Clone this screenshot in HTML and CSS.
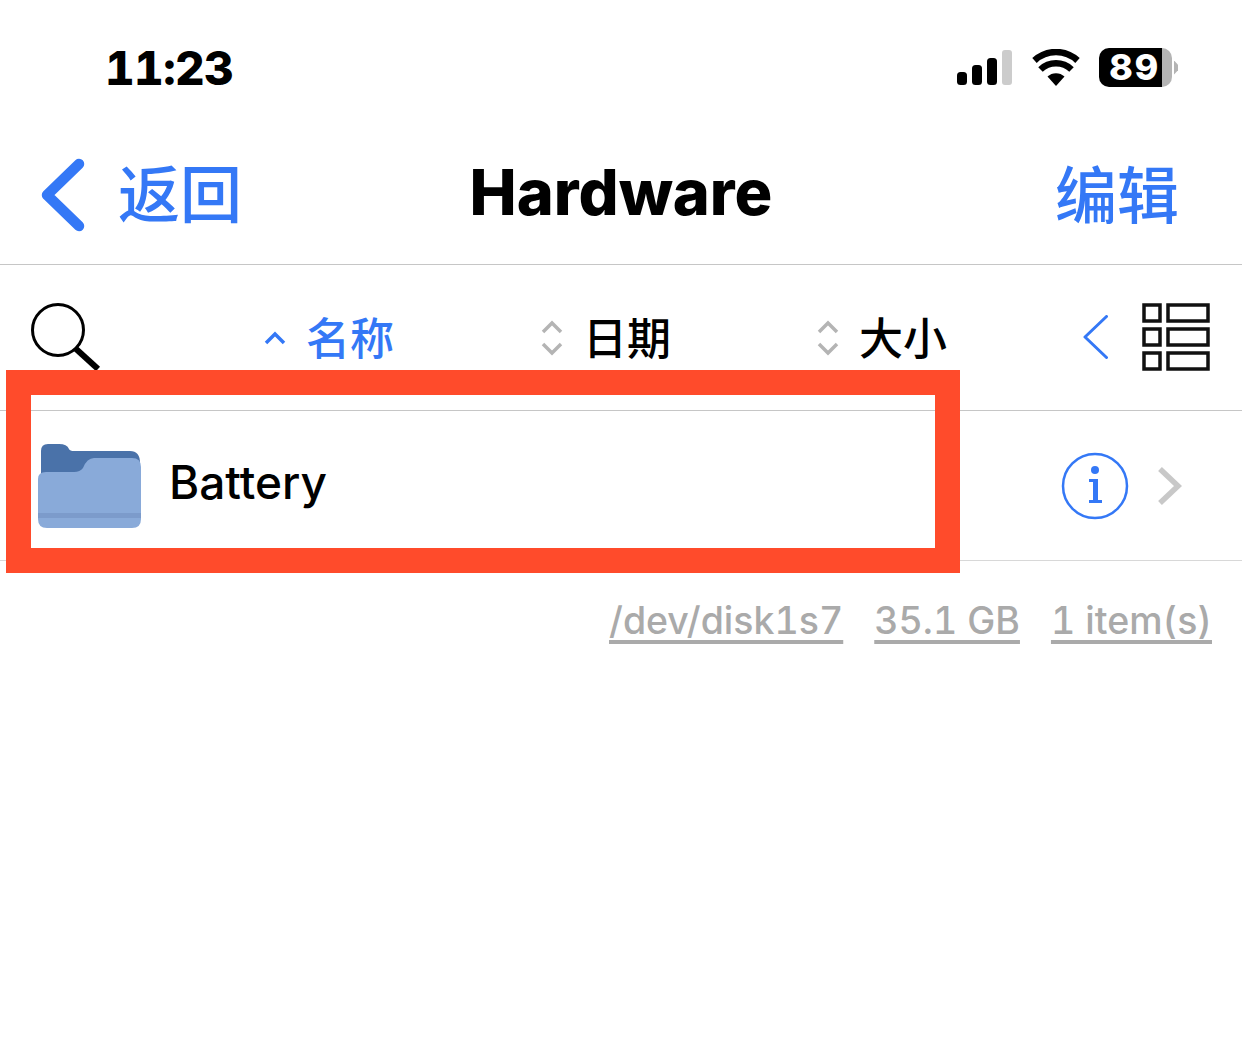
FILE: index.html
```html
<!DOCTYPE html>
<html lang="zh-CN">
<head>
  <meta charset="UTF-8">
  <title>Hardware</title>
  <link rel="stylesheet" href="styles.css">
</head>
<body>
  <div class="status-bar">
    <span class="time">11:23</span>
    <div class="status-icons">
      <svg class="signal" width="56" height="36" viewBox="0 0 56 36">
        <rect x="0" y="22" width="10" height="13" rx="3.5" fill="#000"/>
        <rect x="15" y="15" width="10" height="20" rx="3.5" fill="#000"/>
        <rect x="30" y="8" width="10" height="27" rx="3.5" fill="#000"/>
        <rect x="45" y="0" width="10" height="35" rx="3" fill="#ccc"/>
      </svg>
      <svg class="wifi" width="48" height="38" viewBox="0 0 48 38">
        <path d="M24 37 L15.500 27.500 A12.500 12.500 0 0 1 32.500 27.500 Z" fill="#000"/>
        <path d="M8.500 20.500 A22.500 22.500 0 0 1 39.500 20.500" fill="none" stroke="#000" stroke-width="6.500"/>
        <path d="M2.500 11.500 A31.500 31.500 0 0 1 45.500 11.500" fill="none" stroke="#000" stroke-width="6.500"/>
      </svg>
      <div class="battery">
        <div class="battery-body"><span class="battery-level">89</span></div>
        <div class="battery-nub"></div>
      </div>
    </div>
  </div>

  <header class="nav-bar">
    <a class="back">
      <svg width="46" height="74" viewBox="0 0 46 74">
        <path d="M39 6 L7 37 L39 68" fill="none" stroke="#3478f6" stroke-width="10.500" stroke-linecap="round" stroke-linejoin="round"/>
      </svg>
      <span>返回</span>
    </a>
    <h1>Hardware</h1>
    <a class="edit">编辑</a>
  </header>

  <div class="toolbar">
    <svg class="search" width="70" height="68" viewBox="0 0 70 68">
      <circle cx="27" cy="27" r="25.500" fill="none" stroke="#000" stroke-width="3"/>
      <path d="M44 45 L67 66" stroke="#000" stroke-width="6"/>
    </svg>
    <div class="sort active">
      <svg width="22" height="14" viewBox="0 0 22 14"><path d="M2 12 L11 3 L20 12" fill="none" stroke="#3478f6" stroke-width="3.500"/></svg>
      <span>名称</span>
    </div>
    <div class="sort">
      <svg width="22" height="36" viewBox="0 0 22 36"><path d="M2 12 L11 3 L20 12 M2 24 L11 33 L20 24" fill="none" stroke="#b4b4b4" stroke-width="3.500"/></svg>
      <span>日期</span>
    </div>
    <div class="sort">
      <svg width="22" height="36" viewBox="0 0 22 36"><path d="M2 12 L11 3 L20 12 M2 24 L11 33 L20 24" fill="none" stroke="#b4b4b4" stroke-width="3.500"/></svg>
      <span>大小</span>
    </div>
    <div class="tools">
      <svg width="26" height="44" viewBox="0 0 26 44"><path d="M23.500 1.500 L2 22 L23.500 42.500" fill="none" stroke="#3478f6" stroke-width="3" stroke-linecap="round" stroke-linejoin="round"/></svg>
      <svg width="68" height="68" viewBox="0 0 68 68">
        <g fill="none" stroke="#111" stroke-width="3.500">
          <rect x="2" y="2" width="16" height="16"/><rect x="26" y="2" width="40" height="16"/>
          <rect x="2" y="26" width="16" height="16"/><rect x="26" y="26" width="40" height="16"/>
          <rect x="2" y="50" width="16" height="16"/><rect x="26" y="50" width="40" height="16"/>
        </g>
      </svg>
    </div>
  </div>

  <div class="file-row">
    <svg class="folder" width="104" height="86" viewBox="0 0 104 86">
      <path d="M3 33 V8 Q3 1 10 1 H21 Q29 1 31 6 Q32 8 36 8 H92 Q102 8 102 20 V33 Z" fill="#4a72a9"/>
      <path d="M0 36 Q0 29 8 29 H36 Q42 29 45 25 Q49 15 56 15 H94 Q103 15 103 24 V76 Q103 85 94 85 H9 Q0 85 0 76 Z" fill="#89aad9"/>
      <rect x="0" y="70" width="103" height="5" fill="#7c9bcb"/>
    </svg>
    <span class="file-name">Battery</span>
    <div class="file-actions">
      <svg width="68" height="68" viewBox="0 0 68 68">
        <circle cx="34" cy="34" r="32" fill="none" stroke="#3478f6" stroke-width="2.500"/>
        <circle cx="34" cy="18" r="4" fill="#3478f6"/>
        <path d="M28 27 H37 V48 H41 V51 H28 V48 H32 V30 H28 Z" fill="#3478f6"/>
      </svg>
      <svg width="26" height="40" viewBox="0 0 26 40"><path d="M3 3 L21 20 L3 37" fill="none" stroke="#c8c8c8" stroke-width="5.500"/></svg>
    </div>
  </div>

  <div class="summary">
    <span>/dev/disk1s7</span>
    <span>35.1 GB</span>
    <span>1 item(s)</span>
  </div>

  <div class="highlight"></div>
</body>
</html>
```

FILE: styles.css
```css
body {
  margin: 0;
  width: 1242px;
  height: 1041px;
  overflow: hidden;
  position: relative;
  background: #fff;
  color: #000;
  font-family: Inter, "Noto Sans CJK SC", sans-serif;
}

svg {
  display: block;
  flex: none;
}

.status-bar {
  height: 136px;
  box-sizing: border-box;
  padding: 41px 64px 0 105px;
  display: flex;
  justify-content: space-between;
  align-items: flex-start;
}

.time {
  font-size: 46px;
  font-weight: 800;
  line-height: 54px;
  letter-spacing: -0.600px;
  font-variant-numeric: tabular-nums;
}

.status-icons {
  display: flex;
  align-items: center;
  gap: 19px;
  margin-top: 7px;
}

.battery {
  display: flex;
  align-items: center;
  gap: 2px;
}

.battery-body {
  width: 73px;
  height: 39px;
  border-radius: 10px;
  background: linear-gradient(to right, #000 63px, #b4b4b4 63px);
  display: flex;
  align-items: center;
  padding-left: 10px;
  box-sizing: border-box;
}

.battery-level {
  color: #fff;
  font-size: 36px;
  font-weight: 800;
  line-height: 39px;
  letter-spacing: 1.500px;
}

.battery-nub {
  width: 4px;
  height: 14px;
  background: #b4b4b4;
  clip-path: polygon(0 0, 100% 30%, 100% 70%, 0 100%);
}

.nav-bar {
  height: 129px;
  box-sizing: border-box;
  padding: 0 40px 10px;
  border-bottom: 1px solid #c6c6c6;
  display: grid;
  grid-template-columns: 1fr auto 1fr;
  align-items: center;
}

.back {
  display: flex;
  align-items: center;
  gap: 32px;
  color: #3478f6;
  font-size: 62px;
  font-weight: 500;
}

.back span {
  margin-top: -8px;
}

.nav-bar h1 {
  margin: 0 0 6px;
  font-size: 63px;
  font-weight: 800;
}

.edit {
  justify-self: end;
  margin: 0 23px 7px 0;
  color: #3478f6;
  font-size: 62px;
  font-weight: 500;
}

.toolbar {
  height: 146px;
  box-sizing: border-box;
  border-bottom: 1px solid #c6c6c6;
  padding: 38px 31px 0;
  display: grid;
  grid-template-columns: 233px 277px 276px 266px 1fr;
  align-items: start;
}

.sort {
  display: flex;
  align-items: center;
  gap: 20px;
  font-size: 44px;
  font-weight: 500;
  line-height: 72px;
}

.sort svg {
  margin-top: -2px;
}

.sort.active {
  color: #3478f6;
}

.tools {
  display: flex;
  align-items: center;
  gap: 33px;
}

.file-row {
  height: 150px;
  box-sizing: border-box;
  border-bottom: 1px solid #d8d8d8;
  padding: 0 59px 0 38px;
  display: flex;
  align-items: center;
}

.file-name {
  margin: 0 0 7px 27px;
  font-size: 46px;
  font-weight: 500;
}

.file-actions {
  margin-left: auto;
  display: flex;
  align-items: center;
  gap: 28px;
}

.summary {
  display: flex;
  justify-content: flex-end;
  gap: 31px;
  padding: 35px 30px 0 0;
  color: #aaa;
  font-size: 37.500px;
  font-weight: 500;
  line-height: 50px;
  font-variant-numeric: tabular-nums;
}

.summary span {
  text-decoration: underline;
  text-decoration-thickness: 4px;
  text-underline-offset: 6px;
}

.highlight {
  position: absolute;
  left: 6px;
  top: 370px;
  width: 904px;
  height: 153px;
  border: 25px solid #ff4b2b;
}
```
